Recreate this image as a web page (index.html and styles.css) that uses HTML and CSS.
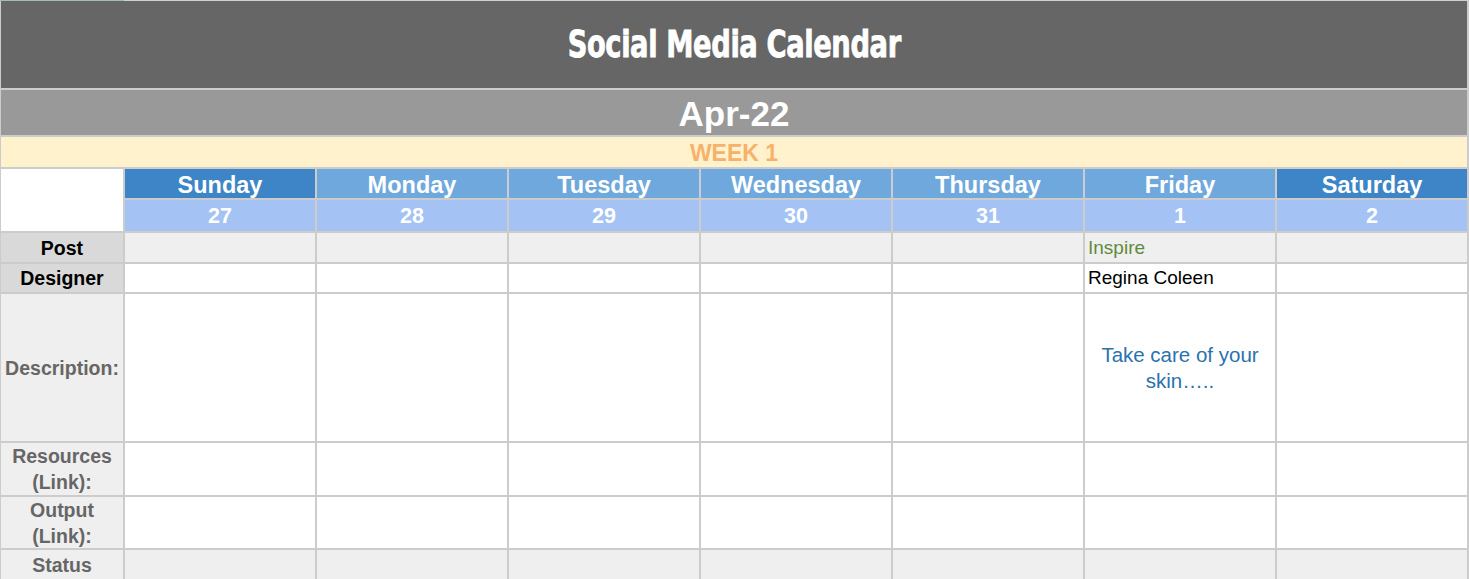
FILE: index.html
```html
<!DOCTYPE html>
<html lang="en">
<head>
<meta charset="utf-8">
<title>Social Media Calendar</title>
<link rel="stylesheet" href="styles.css">
</head>
<body>
<div class="topstrip"><span class="topstrip-sel"></span></div>
<main class="sheet">
  <div class="band band-title"><span class="title-text">Social Media Calendar</span></div>
  <div class="band band-month">Apr-22</div>
  <div class="band band-week">WEEK 1</div>

  <div class="corner"></div>
  <div class="day day-weekend">Sunday</div>
  <div class="day">Monday</div>
  <div class="day">Tuesday</div>
  <div class="day">Wednesday</div>
  <div class="day">Thursday</div>
  <div class="day">Friday</div>
  <div class="day day-weekend">Saturday</div>

  <div class="date">27</div>
  <div class="date">28</div>
  <div class="date">29</div>
  <div class="date">30</div>
  <div class="date">31</div>
  <div class="date">1</div>
  <div class="date">2</div>

  <div class="label label-dark">Post</div>
  <div class="cell cell-grey"></div>
  <div class="cell cell-grey"></div>
  <div class="cell cell-grey"></div>
  <div class="cell cell-grey"></div>
  <div class="cell cell-grey"></div>
  <div class="cell cell-grey text-post">Inspire</div>
  <div class="cell cell-grey"></div>

  <div class="label label-dark">Designer</div>
  <div class="cell"></div>
  <div class="cell"></div>
  <div class="cell"></div>
  <div class="cell"></div>
  <div class="cell"></div>
  <div class="cell text-designer">Regina Coleen</div>
  <div class="cell"></div>

  <div class="label">Description:</div>
  <div class="cell"></div>
  <div class="cell"></div>
  <div class="cell"></div>
  <div class="cell"></div>
  <div class="cell"></div>
  <div class="cell text-desc">Take care of your skin…..</div>
  <div class="cell"></div>

  <div class="label">Resources<br>(Link):</div>
  <div class="cell"></div>
  <div class="cell"></div>
  <div class="cell"></div>
  <div class="cell"></div>
  <div class="cell"></div>
  <div class="cell"></div>
  <div class="cell"></div>

  <div class="label">Output<br>(Link):</div>
  <div class="cell"></div>
  <div class="cell"></div>
  <div class="cell"></div>
  <div class="cell"></div>
  <div class="cell"></div>
  <div class="cell"></div>
  <div class="cell"></div>

  <div class="label">Status</div>
  <div class="cell cell-grey"></div>
  <div class="cell cell-grey"></div>
  <div class="cell cell-grey"></div>
  <div class="cell cell-grey"></div>
  <div class="cell cell-grey"></div>
  <div class="cell cell-grey"></div>
  <div class="cell cell-grey"></div>
</main>
</body>
</html>
```
FILE: styles.css
```css
html, body {
  margin: 0;
  padding: 0;
  background: #ffffff;
  overflow: hidden;
}

body {
  font-family: "Liberation Sans", Arial, sans-serif;
  width: 1469px;
  height: 579px;
}

.topstrip {
  height: 1px;
  background: #d0d0d0;
  display: flex;
}

.topstrip-sel {
  width: 124px;
  background: #a3bcae;
}

.sheet {
  display: grid;
  grid-template-columns: 122px repeat(7, 190px);
  grid-template-rows: 87px 45px 30px 29px 31px 29px 28px 147px 52px 51px 29px;
  gap: 2px;
  padding: 0 2px 0 1px;
  background: #cccccc;
  width: 1466px;
}

.band {
  grid-column: 1 / -1;
  display: flex;
  align-items: center;
  justify-content: center;
  color: #ffffff;
  font-weight: bold;
}

.band-title {
  background: #666666;
  padding-bottom: 1px;
}

.title-text {
  display: inline-block;
  font-family: "DejaVu Sans Condensed", "Liberation Sans", sans-serif;
  font-size: 38px;
  font-weight: bold;
  letter-spacing: -0.5px;
  -webkit-text-stroke: 0.8px #ffffff;
  transform: scaleX(0.8);
}

.band-month {
  background: #999999;
  font-size: 35px;
  padding-top: 2px;
}

.band-week {
  background: #fff2cc;
  color: #f6b26b;
  font-size: 23px;
  padding-top: 2px;
}

.corner {
  grid-row: span 2;
  background: #ffffff;
}

.day,
.date {
  display: flex;
  align-items: center;
  justify-content: center;
  color: #ffffff;
  font-weight: bold;
}

.day {
  background: #6fa8dc;
  font-size: 23.5px;
  padding-top: 4px;
}

.day-weekend {
  background: #3d85c6;
}

.date {
  background: #a4c2f4;
  font-size: 21.5px;
  padding-top: 2px;
}

.label {
  display: flex;
  align-items: center;
  justify-content: center;
  text-align: center;
  background: #efefef;
  color: #666666;
  font-weight: bold;
  font-size: 19.5px;
  line-height: 26px;
}

.label-dark {
  background: #d9d9d9;
  color: #000000;
}

.cell {
  background: #ffffff;
  font-size: 19px;
  display: flex;
  align-items: center;
  padding: 0 3px;
}

.cell-grey {
  background: #efefef;
}

.text-post {
  color: #5f8b3c;
}

.text-designer {
  color: #000000;
}

.text-desc {
  color: #2a72ad;
  justify-content: center;
  text-align: center;
  font-size: 20.5px;
  line-height: 26px;
  padding: 0 10px;
}
```
